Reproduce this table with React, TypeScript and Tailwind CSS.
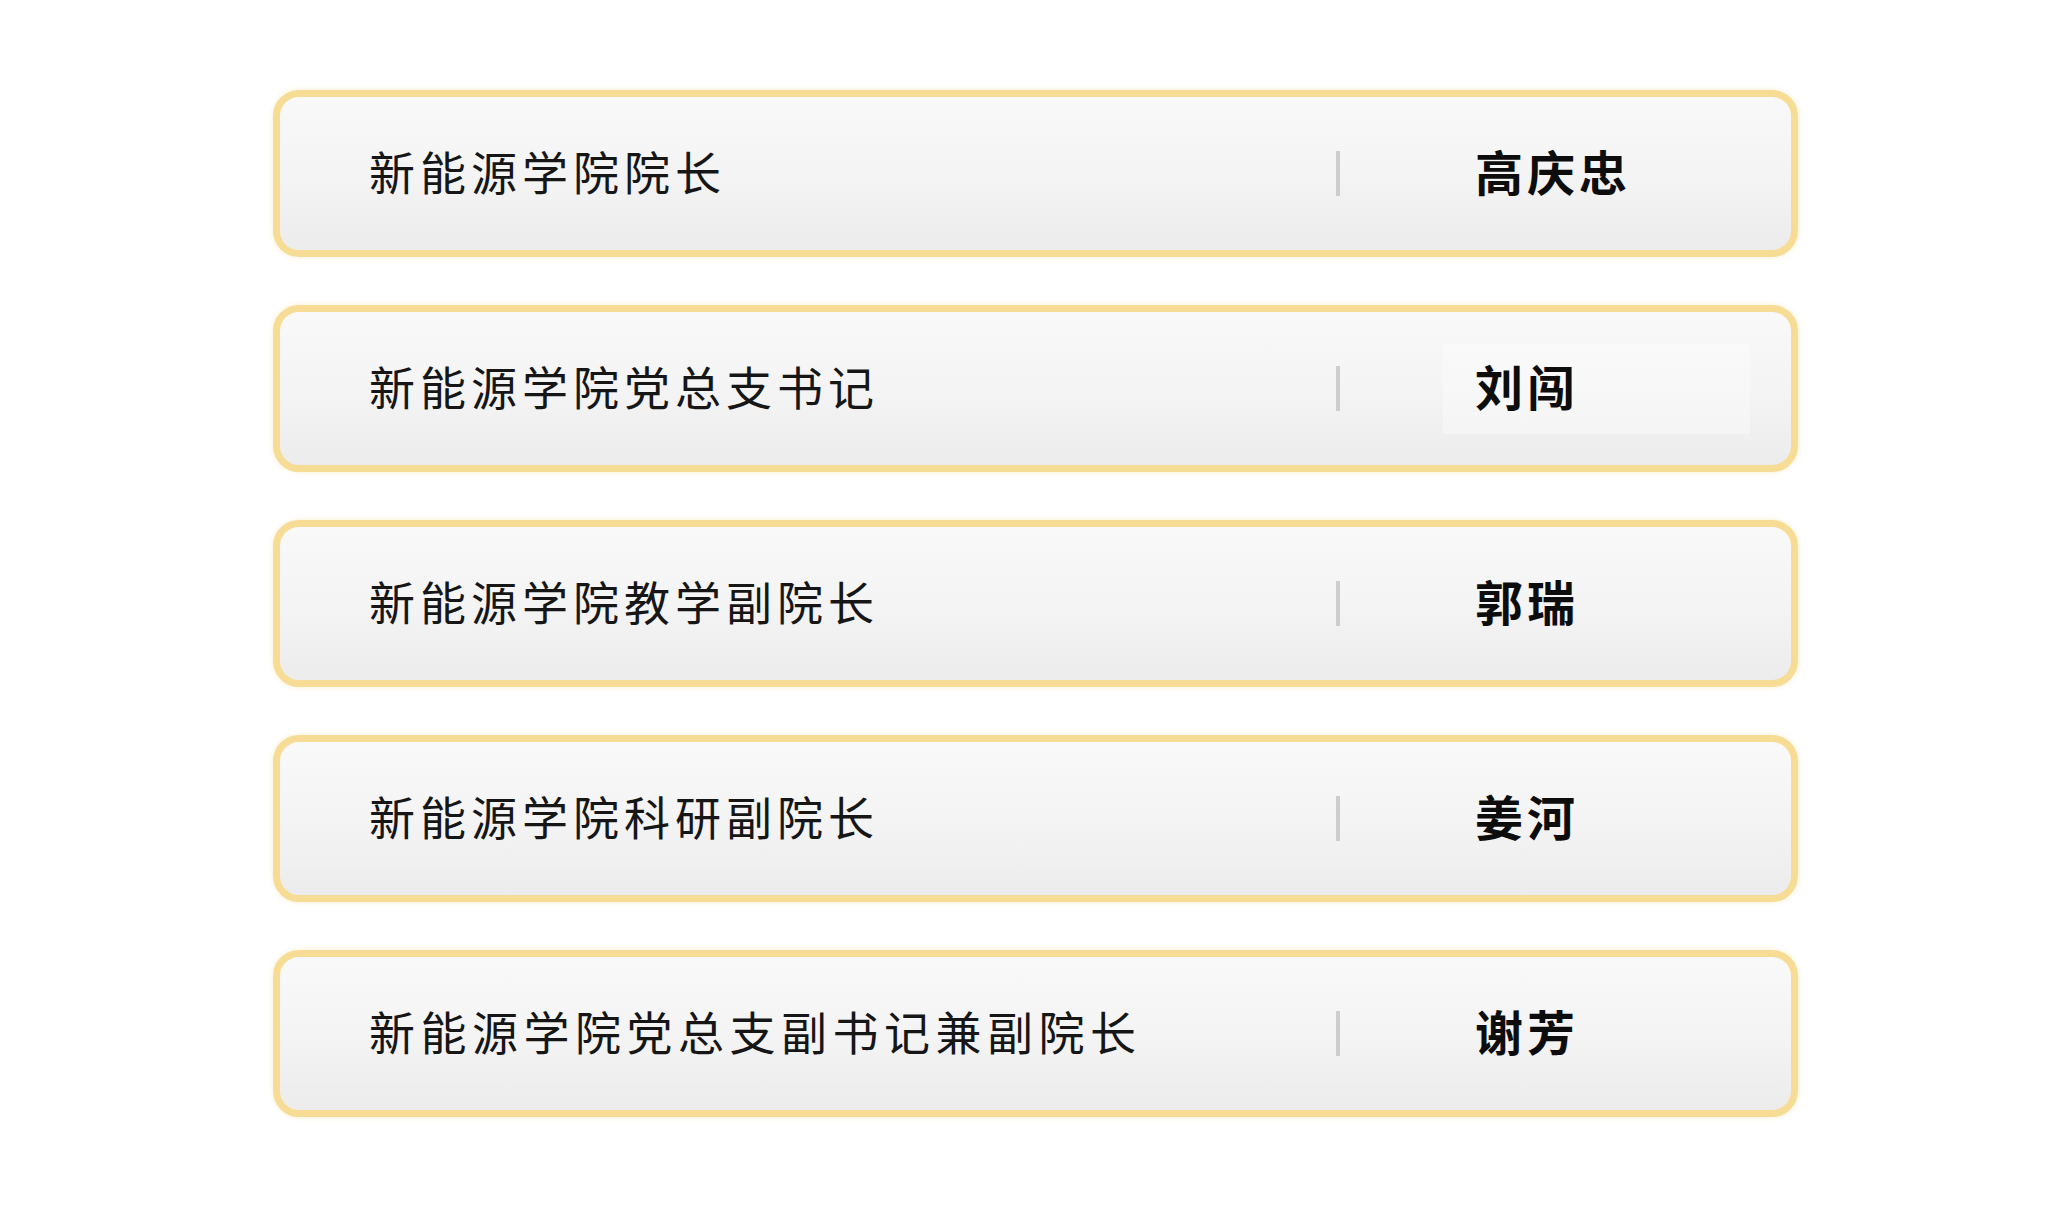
const rows = [
  { title: '新能源学院院长', name: '高庆忠', wide: false, boxed: false },
  { title: '新能源学院党总支书记', name: '刘闯', wide: false, boxed: true },
  { title: '新能源学院教学副院长', name: '郭瑞', wide: false, boxed: false },
  { title: '新能源学院科研副院长', name: '姜河', wide: false, boxed: false },
  { title: '新能源学院党总支副书记兼副院长', name: '谢芳', wide: true, boxed: false },
];

const font = { fontFamily: '"Noto Sans CJK SC", "Noto Sans", sans-serif' };

export default function App() {
  return (
    <main className="min-h-screen w-full bg-white" style={font}>
      <div className="flex flex-col gap-[48px] pt-[90px] pl-[273px]">
        {rows.map((r) => (
          <div
            key={r.name}
            className="flex h-[167px] w-[1525px] items-center rounded-[26px] border-[7px] border-[#f7dc95] bg-gradient-to-b from-[#f9f9f9] via-[#f4f4f4] to-[#ececec] shadow-[0_0_5px_rgba(240,210,130,0.45)]"
          >
            <div
              className={`mb-[8px] flex-1 pl-[89px] text-[46px] font-normal leading-none text-[#161616] ${
                r.wide ? 'tracking-[5.5px]' : 'tracking-[5px]'
              }`}
            >
              {r.title}
            </div>
            <div className="h-[45px] w-[4px] bg-[#cdcdcd]" />
            <div className="ml-[103px] mr-[41px] flex h-[90px] w-[307px] items-center">
              <div
                className={`flex h-full w-full items-center pl-[32px] ${
                  r.boxed ? 'bg-white/35' : ''
                }`}
              >
                <span className="mb-[8px] text-[48px] font-bold leading-none tracking-[4px] text-[#0d0d0d]">
                  {r.name}
                </span>
              </div>
            </div>
          </div>
        ))}
      </div>
    </main>
  );
}
